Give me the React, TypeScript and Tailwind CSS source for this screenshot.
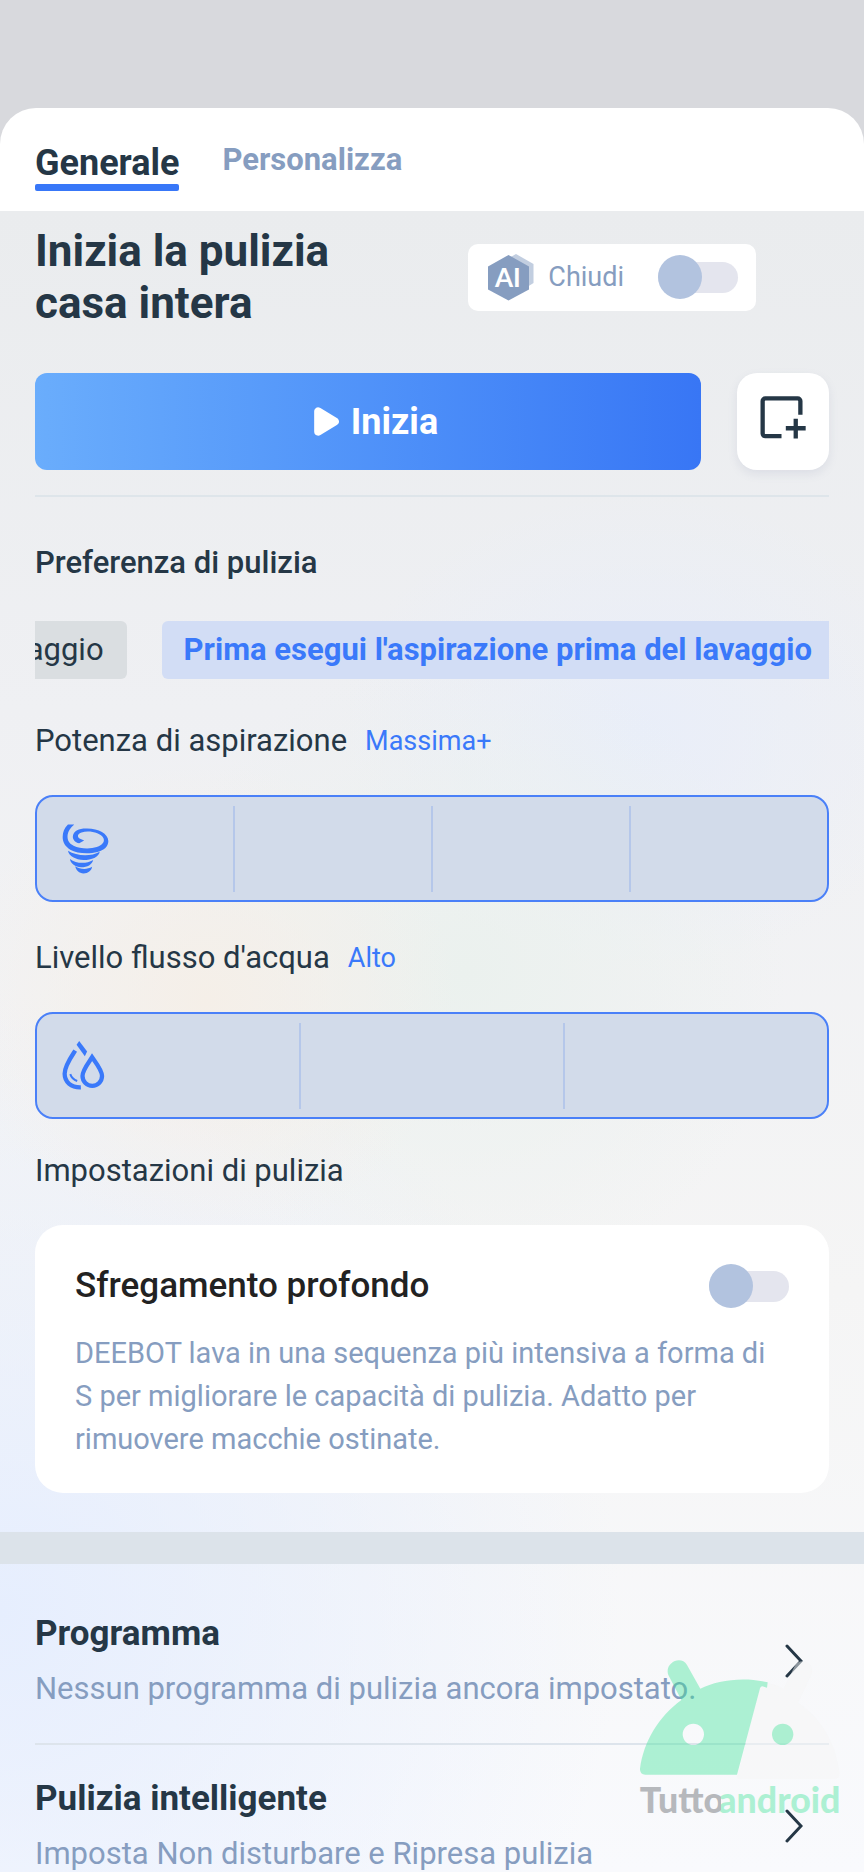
import { useState, type ReactNode } from 'react';

const BACKDROP =
  'bg-[radial-gradient(ellipse_250px_240px_at_24%_790px,#f5efe8_0%,transparent_100%),radial-gradient(ellipse_320px_320px_at_54%_760px,#ebf1ee_0%,transparent_100%),radial-gradient(ellipse_300px_240px_at_74%_520px,#e9eef9_0%,transparent_100%),radial-gradient(ellipse_620px_620px_at_0%_1400px,#e6eefe_0%,transparent_100%),linear-gradient(to_bottom,#eaecee_0%,#eff0f3_30%,#f5f5f5_65%,#f9fafd_100%)]';

function Toggle({ label }: { label: string }) {
  const [on, setOn] = useState(false);

  return (
    <input
      type="checkbox"
      role="switch"
      aria-label={label}
      checked={on}
      onChange={e => setOn(e.target.checked)}
      className="relative h-11 w-20 shrink-0 cursor-pointer appearance-none before:absolute before:inset-x-0 before:top-[7px] before:h-[31px] before:rounded-full before:bg-[#e4e5ee] after:absolute after:left-0 after:top-0 after:size-11 after:rounded-full after:bg-[#b2c3df] checked:after:left-9 checked:after:bg-[#3a79fa]"
    />
  );
}

function AiIcon() {
  return (
    <svg viewBox="0 0 46 47" className="h-[47px] w-[46px]" role="img" aria-label="AI">
      <path d="M28 0 45.500 10v19L28 40 10 29V10Z" fill="#c2cee0" />
      <path d="M20.500 1 41 12.500v23L20.500 46.500 0 35.500v-23Z" fill="#869dc0" />
      <text x="7" y="33" fill="#fff" fontSize="26" fontWeight="700" fontFamily="Lato, sans-serif">AI</text>
    </svg>
  );
}

function PlayIcon() {
  return (
    <svg viewBox="943 171 76 87" className="h-[29px] w-[25px]" aria-hidden="true">
      <path d="M956 184v61l50-30.500Z" fill="#fff" stroke="#fff" strokeWidth="25" strokeLinejoin="round" />
    </svg>
  );
}

function AddAreaIcon() {
  return (
    <svg viewBox="982 559 139 129" className="h-[43px] w-[46px]" fill="none" stroke="#253746" strokeWidth="13" aria-hidden="true">
      <path d="M1104 615v-41a8 8 0 0 0-8-8H998a8 8 0 0 0-8 8v98a8 8 0 0 0 8 8h49" />
      <path d="M1060 656h60M1090 627v60" />
    </svg>
  );
}

function TornadoIcon() {
  return (
    <svg viewBox="184 369 142 150" className="h-[50px] w-[47px]" fill="#3a79fa" aria-hidden="true">
      <path
        d="M202 370h19c-12 10-18 19-20 31-2 17 5 27 18 33 18 9 49 11 70 4 18-6 25-16 20-27-8-16-43-24-66-17-12 4-14 12-6 18l14 6-15 9c-13-3-21-13-19-23 3-16 20-23 43-22 35 1 63 15 64 38 0 17-13 28-33 33-28 7-63 4-82-7-15-9-23-22-23-38 0-15 5-28 16-38Z"
      />
      <path d="M202 449c26 16 68 19 96 3-3 16-24 25-49 25-24-1-44-12-47-28Z" />
      <path d="M208 474c19 14 48 16 70 3-3 14-17 22-36 22-18-1-32-11-34-25Z" />
      <path d="M224 496c15 10 35 11 51 2-2 12-12 20-26 20-13-1-23-10-25-22Z" />
    </svg>
  );
}

function WaterIcon() {
  return (
    <svg viewBox="188 185 130 148" className="h-[49px] w-[43px]" fill="none" stroke="#3a79fa" strokeWidth="13" aria-hidden="true">
      <path d="M279 234c-9 15-29 38-29 57a29.500 29.500 0 0 0 59 0c0-19-20-42-30-57Z" />
      <path d="M228 214c-11 17-32 46-32 70 0 25 20 42 49 41" />
      <path d="M213 285c3 9 10 17 21 21" strokeWidth="6" />
      <path d="M240 185l24 32-7 14-25-35Z" fill="#3a79fa" stroke="none" />
    </svg>
  );
}

function Chevron() {
  return (
    <svg viewBox="0 0 18 34" className="h-[34px] w-[18px] shrink-0" fill="none" stroke="#253746" strokeWidth="3" strokeLinecap="round" aria-hidden="true">
      <path d="M2 2l14 15L2 32" />
    </svg>
  );
}

function Watermark() {
  return (
    <svg viewBox="117 178 606 468" className="pointer-events-none absolute bottom-[57px] right-[23px] h-[156px] w-[202px]" role="img" aria-label="Tuttoandroid">
      <clipPath id="wm-grey">
        <rect x="117" y="540" width="246" height="110" />
      </clipPath>
      <path
        d="M411 537l69-271q2-6 8-5l13 3 2-14q26 6 48 18l32-67c8-16 24-20 38-13 16 9 18 25 12 38l-39 83c70 48 112 118 124 208q2 20-14 20Z"
        fill="#f5f6f6"
        opacity="0.5"
      />
      <g opacity="0.4" fill="#3de598">
        <path
          fillRule="evenodd"
          d="M205 226c-13-35 37-62 56-30l40 71c50-25 128-37 202-19l-2 16-14-4q-5 0-7 6l-69 259H136q-17-1-16-18c11-82 55-155 124-206l-39-75ZM280 372a32 32 0 1 0 0 64a32 32 0 1 0 0-64Z"
        />
        <circle cx="548" cy="404" r="32" />
        <text x="355" y="640" fontSize="107" fontWeight="900" fontFamily="Lato, sans-serif">android</text>
      </g>
      <text x="119" y="640" fill="#b6b8bc" fontSize="107" fontWeight="900" fontFamily="Lato, sans-serif" clipPath="url(#wm-grey)">Tutto</text>
    </svg>
  );
}

function LevelBar({ label, value, levels, icon }: { label: string; value: string; levels: string[]; icon: ReactNode }) {
  return (
    <section>
      <h3 className="flex items-center gap-[18px] text-[31px] leading-10">
        {label}
        <span className="text-[27px] text-[#3a79fa]">{value}</span>
      </h3>
      <div className="mt-[34px] flex h-[107px] items-center rounded-[18px] border-2 border-[#4a80f8] bg-[#d2dbea]">
        {levels.map((level, i) => (
          <button
            key={level}
            type="button"
            aria-label={level}
            aria-pressed={level === value}
            className="flex h-[86px] flex-1 items-center border-r-2 border-[#b5c7ea] pl-[25px] last:border-r-0"
          >
            {i === 0 && icon}
          </button>
        ))}
      </div>
    </section>
  );
}

function LinkRow({ title, text }: { title: string; text: string }) {
  return (
    <a href="#" className="flex items-center justify-between pr-[26px]">
      <div>
        <h2 className="text-[35px] font-bold leading-[44px]">{title}</h2>
        <p className="mt-[13px] whitespace-nowrap text-[31px] leading-10 text-[#869dc0]">{text}</p>
      </div>
      <Chevron />
    </a>
  );
}

export default function App() {
  return (
    <div className="relative flex h-screen flex-col bg-[#d8d9dd] pt-[108px] font-['Roboto',sans-serif] text-[#253746]">
      <nav className="flex shrink-0 items-start gap-[43px] rounded-t-[36px] bg-white px-[35px] pb-5 pt-[34px]">
        <button type="button" className="text-[36px] font-bold leading-[42px]">
          Generale
          <span className="block h-[7px] rounded-[2px] bg-[#3877f8]" />
        </button>
        <button type="button" className="text-[31px] font-bold leading-9 text-[#869dc0]">Personalizza</button>
      </nav>

      <main className={`min-h-0 flex-1 overflow-y-auto [scrollbar-width:none] ${BACKDROP}`}>
        <div className="px-[35px] pt-[14px]">
          <div className="flex items-center justify-between pr-[73px]">
            <h1 className="text-[44px] font-bold leading-[52px]">
              Inizia la pulizia
              <br />
              casa intera
            </h1>
            <div className="flex h-[67px] items-center rounded-[10px] bg-white pl-5 pr-[18px]">
              <AiIcon />
              <span className="ml-[14px] mr-[34px] text-[27px] text-[#869dc0]">Chiudi</span>
              <Toggle label="AI" />
            </div>
          </div>

          <div className="mt-11 flex gap-9">
            <button
              type="button"
              className="flex h-[97px] flex-1 items-center justify-center gap-3 rounded-xl bg-linear-to-r from-[#6aadfc] to-[#3876f5] pl-4 text-[36px] font-bold text-white"
            >
              <PlayIcon />
              Inizia
            </button>
            <button
              type="button"
              aria-label="Aggiungi area"
              className="flex h-[97px] w-[92px] items-center justify-center rounded-[20px] bg-white pb-2 shadow-[0_4px_10px_rgba(120,130,160,0.14)]"
            >
              <AddAreaIcon />
            </button>
          </div>
          <hr className="mt-[25px] border-t-2 border-[#dee5ea]" />

          <h2 className="mt-[46px] text-[31px] font-medium leading-10">Preferenza di pulizia</h2>
          <div className="mt-[38px] flex h-[58px] justify-end gap-[35px] overflow-hidden text-[31px] leading-[56px]">
            <button type="button" className="shrink-0 rounded-md bg-[#dadee1] px-[23px]">Lavaggio</button>
            <button type="button" className="shrink-0 whitespace-nowrap rounded-l-md bg-[#d2ddf5] pl-[22px] pr-[17px] font-bold text-[#3a79fa]">
              Prima esegui l'aspirazione prima del lavaggio
            </button>
          </div>

          <div className="mt-[42px] flex flex-col gap-9">
            <LevelBar
              label="Potenza di aspirazione"
              value="Massima+"
              levels={['Silenziosa', 'Standard', 'Massima', 'Massima+']}
              icon={<TornadoIcon />}
            />
            <LevelBar label="Livello flusso d'acqua" value="Alto" levels={['Basso', 'Medio', 'Alto']} icon={<WaterIcon />} />
          </div>

          <h3 className="mt-8 text-[31px] leading-10">Impostazioni di pulizia</h3>
          <section className="mt-[34px] rounded-[28px] bg-white px-10 pb-8 pt-[39px]">
            <div className="flex items-center justify-between">
              <h4 className="text-[35px] font-medium leading-[44px] text-[#222222]">Sfregamento profondo</h4>
              <Toggle label="Sfregamento profondo" />
            </div>
            <p className="mt-6 text-[29px] leading-[43px] text-[#869dc0]">
              DEEBOT lava in una sequenza più intensiva a forma di S per migliorare le capacità di pulizia. Adatto per rimuovere macchie ostinate.
            </p>
          </section>
        </div>

        <div className="mt-[39px] h-8 bg-[#dce3ea]" />

        <div className="px-[35px] pt-12">
          <LinkRow title="Programma" text="Nessun programma di pulizia ancora impostato." />
          <hr className="mb-8 mt-[34px] border-t-2 border-[#dde4ec]" />
          <LinkRow title="Pulizia intelligente" text="Imposta Non disturbare e Ripresa pulizia" />
        </div>
      </main>

      <Watermark />
    </div>
  );
}
